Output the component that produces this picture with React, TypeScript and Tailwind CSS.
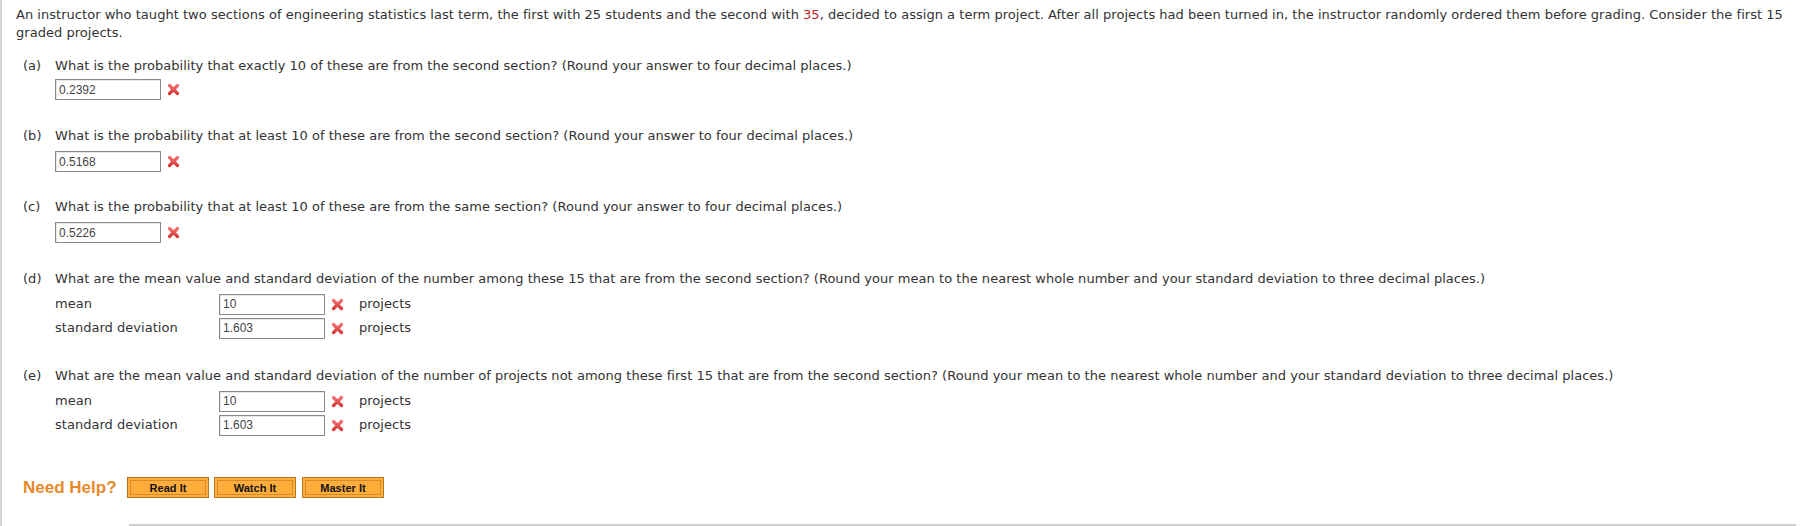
import React from 'react';

function WrongMark() {
    return (
        <svg width="13" height="13" viewBox="0 0 13 13" className="shrink-0">
            <defs>
                <linearGradient id="xg" x1="0" y1="0" x2="0" y2="1">
                    <stop offset="0" stopColor="#f07070" />
                    <stop offset="1" stopColor="#d93a3a" />
                </linearGradient>
            </defs>
            <path d="M2.5 2.5 L10.5 10.5 M10.5 2.5 L2.5 10.5" stroke="url(#xg)" strokeWidth="3.2" strokeLinecap="round" />
        </svg>
    );
}

function AnswerBox({ value }: { value: string }) {
    return (
        <div className="w-[106px] h-[21px] border border-[#8a8a8a] bg-white px-[3px] flex items-center text-[12px] tracking-normal text-[#444] font-['Liberation_Sans',Arial,sans-serif] shadow-[inset_1px_1px_0_#e6e6e6]">
            {value}
        </div>
    );
}

function Part({ letter, className, children }: { letter: string; className?: string; children: React.ReactNode }) {
    return (
        <div className={'flex ' + (className ?? '')}>
            <div className="w-[39px] shrink-0 pl-[7px]">({letter})</div>
            <div className="flex-1">{children}</div>
        </div>
    );
}

function SingleAnswer({ value, gap = 'mt-[6px]' }: { value: string; gap?: string }) {
    return (
        <div className={'flex items-center gap-[6px] ' + gap}>
            <AnswerBox value={value} />
            <WrongMark />
        </div>
    );
}

function LabeledAnswer({ label, value }: { label: string; value: string }) {
    return (
        <div className="flex items-center h-[24px]">
            <div className="w-[164px] shrink-0">{label}</div>
            <AnswerBox value={value} />
            <div className="ml-[6px]"><WrongMark /></div>
            <div className="ml-[15px]">projects</div>
        </div>
    );
}

function HelpButton({ label }: { label: string }) {
    return (
        <div className="w-[82px] h-[21px] border border-[#b8741e] bg-[#ffae3c] p-[2px]">
            <div className="h-full border border-[#d98a2a] flex items-center justify-center text-[11px] font-bold text-[#111] font-['Liberation_Sans',Arial,sans-serif]">
                {label}
            </div>
        </div>
    );
}

export default function App() {
    return (
        <div className="min-h-[526px] bg-white border-l-2 border-[#d4d4d4] pl-[14px] pr-3 pt-[6px] text-[13px] leading-[18px] tracking-[0.03px] text-[#333] font-['DejaVu_Sans',Verdana,sans-serif] flex flex-col">
            <p>
                An instructor who taught two sections of engineering statistics last term, the first with 25 students and the second with <span className="text-[#c0261f]">35</span>, decided to assign a term project. After all projects had been turned in, the instructor randomly ordered them before grading. Consider the first 15<br />
                graded projects.
            </p>

            <div className="flex flex-col">
                <Part letter="a" className="mt-[15px]">
                    What is the probability that exactly 10 of these are from the second section? (Round your answer to four decimal places.)
                    <SingleAnswer value="0.2392" gap="mt-[4px]" />
                </Part>
                <Part letter="b" className="mt-[27px]">
                    What is the probability that at least 10 of these are from the second section? (Round your answer to four decimal places.)
                    <SingleAnswer value="0.5168" />
                </Part>
                <Part letter="c" className="mt-[26px]">
                    What is the probability that at least 10 of these are from the same section? (Round your answer to four decimal places.)
                    <SingleAnswer value="0.5226" />
                </Part>
                <Part letter="d" className="mt-[27px]">
                    What are the mean value and standard deviation of the number among these 15 that are from the second section? (Round your mean to the nearest whole number and your standard deviation to three decimal places.)
                    <div className="mt-[4px]">
                        <LabeledAnswer label="mean" value="10" />
                        <LabeledAnswer label="standard deviation" value="1.603" />
                    </div>
                </Part>
                <Part letter="e" className="mt-[27px]">
                    What are the mean value and standard deviation of the number of projects not among these first 15 that are from the second section? (Round your mean to the nearest whole number and your standard deviation to three decimal places.)
                    <div className="mt-[4px]">
                        <LabeledAnswer label="mean" value="10" />
                        <LabeledAnswer label="standard deviation" value="1.603" />
                    </div>
                </Part>
            </div>

            <div className="mt-[40px] flex items-center pl-[7px]">
                <div className="w-[104px] text-[17px] tracking-normal font-bold text-[#e8892b] font-['Liberation_Sans',Arial,sans-serif]">Need Help?</div>
                <div className="flex gap-[5px]">
                    <HelpButton label="Read It" />
                    <HelpButton label="Watch It" />
                    <div className="ml-[1px]"><HelpButton label="Master It" /></div>
                </div>
            </div>

            <div className="mt-auto ml-[113px] border-t-2 border-[#cfcfcf]" />
        </div>
    );
}
